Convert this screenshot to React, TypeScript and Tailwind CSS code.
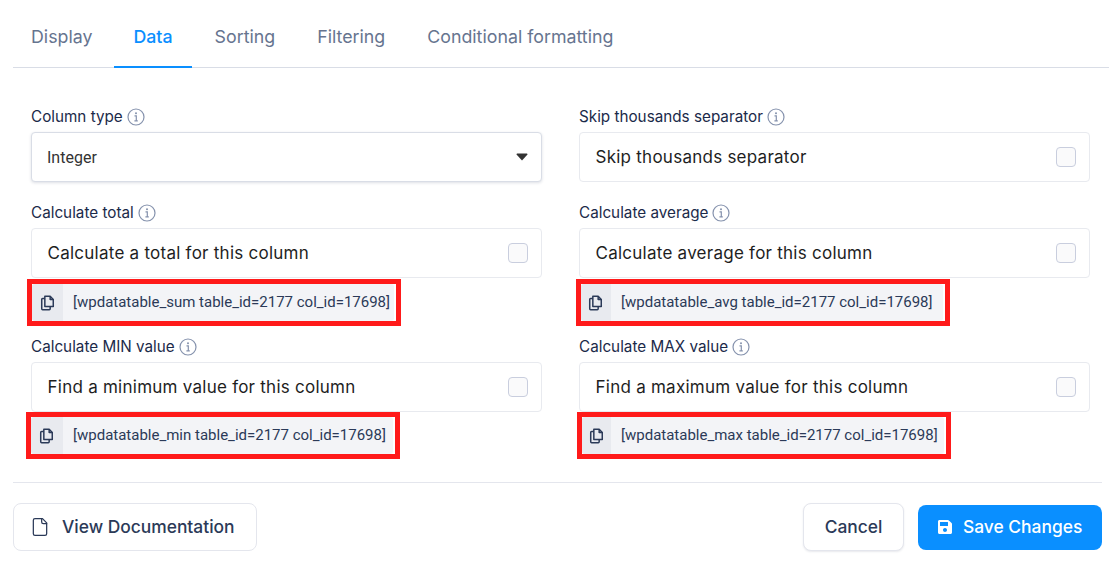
import React from "react";
import { FaSave } from "react-icons/fa";
import { LuFile } from "react-icons/lu";

const tabs = ["Display", "Data", "Sorting", "Filtering", "Conditional formatting"];

function InfoIcon() {
  return (
    <svg width="18" height="18" viewBox="0 0 18 18" fill="none" className="ml-1 shrink-0 text-[#8592ad]">
      <circle cx="9" cy="9" r="8" stroke="currentColor" strokeWidth="1.2" />
      <circle cx="9" cy="5.3" r="1" fill="currentColor" />
      <path d="M7.5 7.9H9.3V12.6M7.4 12.9H10.8" stroke="currentColor" strokeWidth="1.2" />
    </svg>
  );
}

function CopyIcon() {
  return (
    <svg width="15" height="16" viewBox="0 0 16 18" fill="none" stroke="#2b3a58" strokeWidth="1.7" strokeLinejoin="round" className="ml-[-1px]">
      <path d="M5 1.5H11L14.5 5V13H5Z" />
      <path d="M11 1.5V5H14.5" />
      <path d="M5 4H2.5C1.9 4 1.5 4.4 1.5 5V15.5C1.5 16.1 1.9 16.5 2.5 16.5H10C10.6 16.5 11 16.1 11 15.5V13" />
    </svg>
  );
}

function Label({ text }: { text: string }) {
  return (
    <div className="flex h-5 items-center pt-px text-[15.25px] leading-5 text-[#1b2a4a]">
      {text}
      <InfoIcon />
    </div>
  );
}

function CheckRow({ text }: { text: string }) {
  return (
    <div className="mt-1.5 flex h-[50px] items-center justify-between rounded border border-[#e8eaef] bg-white pl-[15.5px] pr-[13px] text-[17px] tracking-[0.25px] text-[#1e1e1e]">
      <span className="pt-0.5">{text}</span>
      <span className="h-5 w-5 rounded border border-[#c9cede] bg-[#fafafb]"></span>
    </div>
  );
}

function Shortcode({ text, className, iconClass }: { text: string; className: string; iconClass: string }) {
  return (
    <div className={"h-[47px] w-[374px] border-[5px] border-[#ff1a1a] bg-white pr-[2px] " + className}>
      <div className="flex h-full items-center overflow-hidden rounded-[3px] bg-[#f3f4f7] font-['Roboto',sans-serif] text-[15px] text-[#2b3a58]">
        <span className={"flex h-full items-center justify-center bg-[#e8eaef] " + iconClass}>
          <CopyIcon />
        </span>
        <span className="whitespace-nowrap pl-[10px]">{text}</span>
      </div>
    </div>
  );
}

export default function App() {
  return (
    <div className="h-[564px] w-[1118px] overflow-hidden bg-white pl-[13px] pr-[16px] font-['Inter',sans-serif]">
      <div className="mr-[-7px] flex h-[68px] gap-1 border-b border-[#d9dde6] pt-[8px]">
        {tabs.map((tab) => (
          <div
            key={tab}
            className={
              "mb-[-1px] flex items-center border-b-2 px-[19px] text-[17.8px] first:ml-[-1px] first:mr-[-1px] " +
              (tab === "Data" ? "border-[#0a8fff] font-medium text-[#0a8fff]" : "border-transparent text-[#66748f]")
            }
          >
            {tab}
          </div>
        ))}
      </div>

      <div className="grid grid-cols-[511px_511px] gap-x-[37px] pl-[18px] pt-[38px]">
        <div>
          <Label text="Column type" />
          <div className="mt-1.5 flex h-[50px] items-center justify-between rounded border border-[#d9dde6] bg-white pl-[15px] pr-[13px] text-[16px] text-[#333] shadow-[0_1px_3px_rgba(30,40,80,0.15)]">
            <span className="pt-0.5 font-['Roboto',sans-serif]">Integer</span>
            <svg width="12" height="8" viewBox="0 0 12 8" fill="#333">
              <path d="M0.5 1.5C0.5 0.7 1 0.5 1.5 0.5H10.5C11 0.5 11.5 0.7 11.5 1.5L6 7.5Z" />
            </svg>
          </div>
        </div>
        <div>
          <Label text="Skip thousands separator" />
          <CheckRow text="Skip thousands separator" />
        </div>

        <div className="mt-5">
          <Label text="Calculate total" />
          <CheckRow text="Calculate a total for this column" />
          <Shortcode
            text="[wpdatatable_sum table_id=2177 col_id=17698]"
            className="ml-[-4px] mt-px"
            iconClass="w-[31px]"
          />
        </div>
        <div className="mt-5">
          <Label text="Calculate average" />
          <CheckRow text="Calculate average for this column" />
          <Shortcode
            text="[wpdatatable_avg table_id=2177 col_id=17698]"
            className="ml-[-3px] mt-px"
            iconClass="w-[30px]"
          />
        </div>

        <div className="mt-[10px]">
          <Label text="Calculate MIN value" />
          <CheckRow text="Find a minimum value for this column" />
          <Shortcode
            text="[wpdatatable_min table_id=2177 col_id=17698]"
            className="ml-[-5px]"
            iconClass="w-[32px]"
          />
        </div>
        <div className="mt-[10px]">
          <Label text="Calculate MAX value" />
          <CheckRow text="Find a maximum value for this column" />
          <Shortcode
            text="[wpdatatable_max table_id=2177 col_id=17698]"
            className="ml-[-2px]"
            iconClass="w-[29px]"
          />
        </div>
      </div>

      <div className="mt-[23px] border-t border-[#e4e6ed] pt-[20px]">
        <div className="flex items-center justify-between">
          <button className="flex h-[48px] w-[244px] items-center rounded-lg border border-[#e4e6ed] bg-white pl-[16px] text-[17.4px] font-medium text-[#2b3a58]">
            <LuFile className="mr-[12px] h-[20px] w-[20px]" strokeWidth={1.5} />
            <span className="pt-px">View Documentation</span>
          </button>
          <div className="flex items-center gap-[14px]">
            <button className="h-[48px] w-[101px] rounded-lg border border-[#e4e6ed] bg-white text-[17.4px] font-medium text-[#2b3a58] shadow-[0_1px_2px_rgba(30,40,80,0.1)]">
              Cancel
            </button>
            <button className="flex h-[45px] w-[184px] items-center rounded-lg bg-[#0a8fff] pl-[19px] text-[17.4px] font-medium text-white">
              <FaSave className="mr-[10px] h-4 w-4" />
              <span>Save Changes</span>
            </button>
          </div>
        </div>
      </div>
    </div>
  );
}
